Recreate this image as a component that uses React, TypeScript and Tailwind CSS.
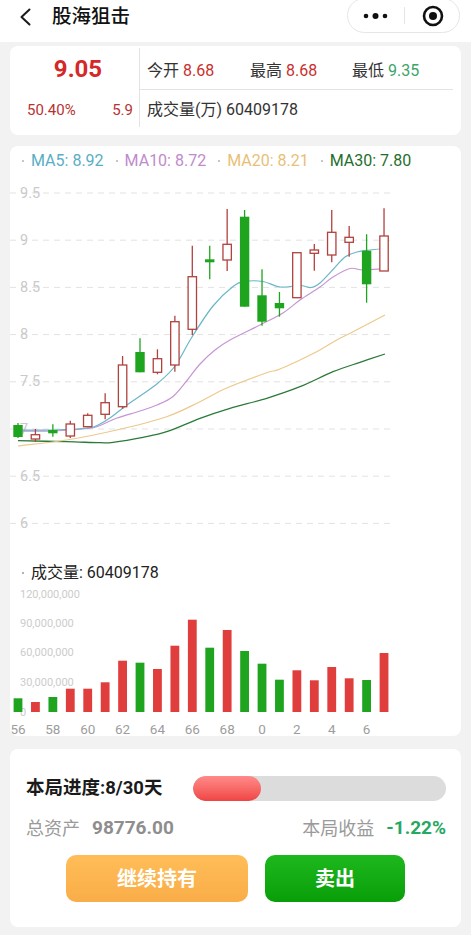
import React from "react";

const FONT = { fontFamily: "Roboto, 'Noto Sans CJK SC', 'Noto Sans', sans-serif" };

const X = (i: number) => 18 + i * 17.43;

// [wickTop, bodyTop, bodyBottom, wickBottom, isRed]
const candles: [number, number, number, number, boolean][] = [
  [423, 425, 437, 438, false],
  [429, 434.7, 439, 442, true],
  [424.3, 430, 433.3, 436.7, false],
  [420.7, 424, 436, 438, true],
  [413.3, 415.3, 426.7, 427.3, true],
  [393.3, 402.7, 414.3, 419.3, true],
  [356, 365, 406.7, 408.7, true],
  [338.3, 352, 372.3, 372.3, false],
  [349.3, 358.7, 372.3, 374.3, true],
  [315.7, 321.7, 365, 371.7, true],
  [245.7, 276.7, 329.3, 335, true],
  [245.7, 259.3, 262.3, 279.3, false],
  [209, 244.3, 260, 271, true],
  [210, 216.7, 306.7, 306.7, false],
  [269.3, 295.3, 321.7, 325.7, false],
  [292, 303, 308.3, 316.7, false],
  [252.7, 252.7, 297.7, 297.7, true],
  [244, 250, 253.3, 270.7, true],
  [210, 232.3, 255, 262.3, true],
  [226, 237.3, 242.3, 256.7, true],
  [234.3, 250.7, 284.3, 302.7, false],
  [208.3, 236, 271, 271, true],
];

const vols = [13.7, 10, 15, 23.3, 23.3, 29.7, 51.3, 49.3, 43, 66.3, 92.3, 64.3, 82, 61, 48.3, 32.3, 41.7, 31.7, 45, 33.7, 32, 59];

const ma5 = [[18, 430], [53, 430], [88, 428], [100, 424], [112, 416.5], [125, 406.5], [140, 396], [158, 383], [175, 366], [192, 337], [213, 306], [233, 286.5], [245, 281.5], [263, 281.5], [280, 287], [300, 285.5], [311, 287.5], [320, 283], [333, 269.5], [345, 257], [357, 252], [370, 250], [385, 248.5]];
const ma10 = [[18, 431], [53, 431], [88, 428.5], [100, 425.5], [117, 418], [140, 411], [157, 405], [173, 396.5], [187, 380.5], [200, 364], [215, 350], [230, 340], [260, 325], [283, 313], [300, 300], [320, 287], [333, 277], [350, 268.5], [363, 270], [385, 268.5]];
const ma20 = [[18, 446], [66.7, 440], [116.7, 430], [166.7, 416.7], [200, 401.7], [226.7, 388], [266.7, 372.7], [280, 369], [316.7, 351.7], [336.7, 340], [353, 331.7], [385, 315]];
const ma30 = [[18, 440.7], [66.7, 441.7], [100, 442.7], [113, 442.3], [143, 437.3], [166.7, 431.7], [200, 418.3], [230, 408.3], [266.7, 398.3], [300, 386.7], [333, 371.7], [360, 362.3], [385, 354]];

function smooth(pts: number[][]) {
  let d = `M${pts[0][0]},${pts[0][1]}`;
  for (let i = 0; i < pts.length - 1; i++) {
    const p0 = pts[i - 1] || pts[i];
    const p1 = pts[i];
    const p2 = pts[i + 1];
    const p3 = pts[i + 2] || p2;
    const c1x = p1[0] + (p2[0] - p0[0]) / 6;
    const c1y = p1[1] + (p2[1] - p0[1]) / 6;
    const c2x = p2[0] - (p3[0] - p1[0]) / 6;
    const c2y = p2[1] - (p3[1] - p1[1]) / 6;
    d += ` C${c1x},${c1y} ${c2x},${c2y} ${p2[0]},${p2[1]}`;
  }
  return d;
}

const RED_LINE = "#b0423d";
const GREEN = "#1ea41e";

function PriceChart() {
  const grid: [number, string][] = [
    [193, "9.5"], [240.2, "9"], [287.4, "8.5"], [334.6, "8"], [381.8, "7.5"], [429, "7"], [476.2, "6.5"], [523.4, "6"],
  ];
  return (
    <svg width={451} height={385} className="block">
      <g transform="translate(-10,-176)">
        {grid.map(([y, t]) => (
          <line key={t + "l"} x1={10} x2={392} y1={y} y2={y} stroke="#e2e2e2" strokeWidth={1} strokeDasharray="6 5" />
        ))}
        {grid.map(([y, t]) => (
          <text key={t} x={20} y={y} dominantBaseline="central" fontSize={14.5} fill="#cacaca" style={FONT}>
            {t}
          </text>
        ))}
        <path d={smooth(ma30)} fill="none" stroke="#2b7a39" strokeWidth={1.3} />
        <path d={smooth(ma20)} fill="none" stroke="#ecc98c" strokeWidth={1.2} />
        <path d={smooth(ma10)} fill="none" stroke="#c596d3" strokeWidth={1.2} />
        <path d={smooth(ma5)} fill="none" stroke="#6ab6c9" strokeWidth={1.2} />
        {candles.map(([wt, bt, bb, wb, red], i) => {
          const x = X(i);
          const c = red ? RED_LINE : GREEN;
          const h = Math.max(bb - bt, 1.5);
          return (
            <g key={i}>
              <line x1={x} x2={x} y1={wt} y2={wb} stroke={c} strokeWidth={1.3} />
              {red ? (
                <rect x={x - 4.2} y={bt} width={8.4} height={h} fill="#fff" stroke={c} strokeWidth={1.3} />
              ) : (
                <rect x={x - 4.7} y={bt} width={9.4} height={h} fill={GREEN} />
              )}
            </g>
          );
        })}
      </g>
    </svg>
  );
}

function VolumeChart() {
  const labels: [number, string][] = [
    [594, "120,000,000"], [623.5, "90,000,000"], [652.5, "60,000,000"], [682, "30,000,000"], [712, "0"],
  ];
  const xl = ["56", "58", "60", "62", "64", "66", "68", "0", "2", "4", "6"];
  return (
    <svg width={451} height={151} className="block">
      <g transform="translate(-10,-585)">
        {labels.map(([y, t]) => (
          <text key={t} x={20} y={y} dominantBaseline="central" fontSize={11} fill="#cccccc" style={FONT}>
            {t}
          </text>
        ))}
        {vols.map((h, i) => (
          <rect key={i} x={X(i) - 4.4} y={712 - h} width={8.8} height={h} fill={candles[i][4] ? "#e03d3d" : GREEN} />
        ))}
        {xl.map((t, k) => (
          <text key={t + k} x={X(k * 2)} y={729} textAnchor="middle" dominantBaseline="central" fontSize={13.5} fill="#9d9d9d" style={FONT}>
            {t}
          </text>
        ))}
      </g>
    </svg>
  );
}

function LegendItem({ label, color }: { label: string; color: string }) {
  return (
    <div className="flex items-center">
      <span className="w-[2px] h-[2px] rounded-full bg-[#b5b5b5]" />
      <span className="ml-[7px] text-[16px]" style={{ color }}>
        {label}
      </span>
    </div>
  );
}

export default function App() {
  return (
    <div className="w-[471px] h-[935px] bg-[#f2f2f2] overflow-hidden" style={FONT}>
      {/* header */}
      <div className="h-[42px] bg-white">
        <div className="h-[33px] flex items-center">
          <svg width="14" height="18" viewBox="0 0 14 18" className="ml-[18px]">
            <path d="M11.5 1.5 L3.5 9 L11.5 16.5" fill="none" stroke="#1a1a1a" strokeWidth="2" strokeLinecap="round" strokeLinejoin="round" />
          </svg>
          <div className="ml-[20px] text-[19.5px] font-medium text-[#111]">股海狙击</div>
          <div className="ml-auto mr-[11px] w-[113px] h-[35px] -mt-[2px] rounded-full border border-[#e6e6e6] flex items-center">
            <svg width="30" height="10" viewBox="0 0 30 10" className="ml-[14px]">
              <circle cx="4" cy="5" r="2.3" fill="#111" />
              <circle cx="13.5" cy="5" r="3" fill="#111" />
              <circle cx="23" cy="5" r="2.3" fill="#111" />
            </svg>
            <div className="ml-[12px] w-px h-[17px] bg-[#e5e5e5]" />
            <svg width="24" height="24" viewBox="0 0 24 24" className="ml-[16px]">
              <circle cx="12" cy="12" r="9" fill="none" stroke="#111" strokeWidth="2.6" />
              <circle cx="12" cy="12" r="4" fill="#111" />
            </svg>
          </div>
        </div>
      </div>

      {/* quote card */}
      <div className="mx-[10px] mt-[4px] h-[89px] bg-white rounded-[8px] flex">
        <div className="w-[129px] flex flex-col">
          <div className="h-[43px] flex items-end justify-center pl-[7px] pb-[8px]">
            <span className="text-[24px] font-bold text-[#d52828] leading-none">9.05</span>
          </div>
          <div className="h-[42px] flex items-center justify-between pl-[17px] pr-[6px] text-[15px] text-[#b83232]">
            <span>50.40%</span>
            <span>5.9</span>
          </div>
        </div>
        <div className="w-px bg-[#e3e3e3] mt-[2px] mb-[8px]" />
        <div className="flex-1 flex flex-col pr-[8px]">
          <div className="h-[43px] flex items-end pb-[6px] pl-[7px] text-[16px] text-[#333]">
            <div className="w-[103px]">今开 <span className="text-[#c8302e]">8.68</span></div>
            <div className="w-[102px]">最高 <span className="text-[#c8302e]">8.68</span></div>
            <div>最低 <span className="text-[#3ca46a]">9.35</span></div>
          </div>
          <div className="h-px bg-[#e3e3e3]" />
          <div className="h-[40px] flex items-center pl-[7px] text-[16px] text-[#333]">成交量(万) 60409178</div>
        </div>
      </div>

      {/* chart card */}
      <div className="mx-[10px] mt-[11px] h-[590px] bg-white rounded-[8px] overflow-hidden">
        <div className="h-[30px] flex items-center pl-[12px] gap-[12px]">
          <LegendItem label="MA5: 8.92" color="#5aaec3" />
          <LegendItem label="MA10: 8.72" color="#c08bcd" />
          <LegendItem label="MA20: 8.21" color="#e8bf78" />
          <LegendItem label="MA30: 7.80" color="#1f6f2c" />
        </div>
        <PriceChart />
        <div className="h-[24px] flex items-center pl-[12px]">
          <span className="w-[2px] h-[2px] rounded-full bg-[#9a9a9a]" />
          <span className="ml-[7px] text-[16px] text-[#222]">成交量: 60409178</span>
        </div>
        <VolumeChart />
      </div>

      {/* action card */}
      <div className="mx-[10px] mt-[13px] h-[178px] bg-white rounded-[8px] pt-[27px] pl-[16px] pr-[15px]">
        <div className="h-[25px] flex items-center justify-between">
          <span className="text-[18.5px] font-bold text-[#1a1a1a]">本局进度:8/30天</span>
          <div className="w-[253px] h-[25px] rounded-full bg-[#dcdcdc] overflow-hidden">
            <div className="w-[68px] h-full rounded-full bg-gradient-to-b from-[#ff8a8a] to-[#ef4343]" />
          </div>
        </div>
        <div className="mt-[15px] h-[24px] flex items-center justify-between text-[18px]">
          <div className="flex items-center">
            <span className="text-[#9a9a9a]">总资产</span>
            <span className="ml-[12px] font-bold text-[#8e8e8e] text-[19px]">98776.00</span>
          </div>
          <div className="flex items-center">
            <span className="text-[#9a9a9a]">本局收益</span>
            <span className="ml-[12px] font-bold text-[#25a862] text-[19px]">-1.22%</span>
          </div>
        </div>
        <div className="mt-[15px] flex justify-center gap-[17px] -ml-[1px]">
          <div className="w-[182px] h-[47px] rounded-[10px] bg-gradient-to-b from-[#ffbd58] to-[#f9ad48] flex items-center justify-center text-white text-[20px] font-bold">
            继续持有
          </div>
          <div className="w-[140px] h-[47px] rounded-[10px] bg-gradient-to-b from-[#1db81d] to-[#079e07] flex items-center justify-center text-white text-[20px] font-bold">
            卖出
          </div>
        </div>
      </div>
    </div>
  );
}
